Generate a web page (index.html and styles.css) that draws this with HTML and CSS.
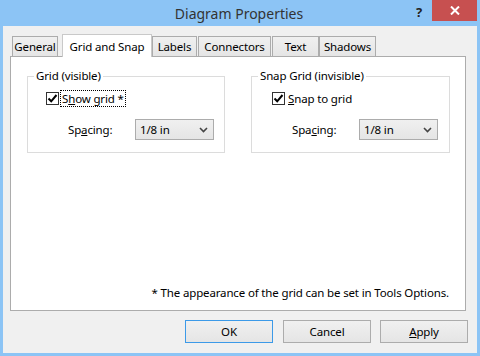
FILE: index.html
```html
<!DOCTYPE html>
<html lang="en">
<head>
    <meta charset="UTF-8">
    <meta name="viewport" content="width=device-width, initial-scale=1.0">
    <title>Diagram Properties</title>
    <link rel="stylesheet" href="styles.css">
</head>
<body>
    <div class="window">
        <div class="titlebar">
            <div class="title">Diagram Properties</div>
            <div class="help">?</div>
            <div class="close">
                <svg width="10" height="9" viewBox="0 0 10 9">
                    <path d="M1 0.5 L9 8.5 M9 0.5 L1 8.5" stroke="#fff" stroke-width="2" fill="none"/>
                </svg>
            </div>
        </div>
        <div class="client">
            <div class="tabs">
                <div class="tab tab-general">General</div>
                <div class="tab tab-grid active">Grid and Snap</div>
                <div class="tab tab-labels">Labels</div>
                <div class="tab tab-connectors">Connectors</div>
                <div class="tab tab-text">Text</div>
                <div class="tab tab-shadows">Shadows</div>
            </div>
            <div class="panel">
                <div class="groups">
                    <fieldset class="group group-left">
                        <legend>Grid (visible)</legend>
                        <div class="check-row">
                            <span class="checkbox">
                                <svg width="11" height="11" viewBox="0 0 11 11">
                                    <path d="M1.5 5.5 L4.2 8.3 L9.5 2" stroke="#000" stroke-width="2" fill="none"/>
                                </svg>
                            </span>
                            <span class="check-label focused">S<u>h</u>ow grid *</span>
                        </div>
                        <div class="spacing-row">
                            <span class="spacing-label">Sp<u>a</u>cing:</span>
                            <div class="select">
                                <span>1/8 in</span>
                                <svg width="9" height="6" viewBox="0 0 9 6">
                                    <path d="M1 1 L4.5 4.5 L8 1" stroke="#444" stroke-width="1.6" fill="none"/>
                                </svg>
                            </div>
                        </div>
                    </fieldset>
                    <fieldset class="group group-right">
                        <legend>Snap Grid (invisible)</legend>
                        <div class="check-row">
                            <span class="checkbox">
                                <svg width="11" height="11" viewBox="0 0 11 11">
                                    <path d="M1.5 5.5 L4.2 8.3 L9.5 2" stroke="#000" stroke-width="2" fill="none"/>
                                </svg>
                            </span>
                            <span class="check-label"><u>S</u>nap to grid</span>
                        </div>
                        <div class="spacing-row">
                            <span class="spacing-label">Spa<u>c</u>ing:</span>
                            <div class="select">
                                <span>1/8 in</span>
                                <svg width="9" height="6" viewBox="0 0 9 6">
                                    <path d="M1 1 L4.5 4.5 L8 1" stroke="#444" stroke-width="1.6" fill="none"/>
                                </svg>
                            </div>
                        </div>
                    </fieldset>
                </div>
                <p class="note">* The appearance of the grid can be set in Tools Options.</p>
            </div>
            <div class="buttons">
                <button class="btn default">OK</button>
                <button class="btn">Cancel</button>
                <button class="btn"><u>A</u>pply</button>
            </div>
        </div>
    </div>
</body>
</html>
```

FILE: styles.css
```css
body {
    margin: 0;
    font-family: "Noto Sans", "Open Sans", sans-serif;
    font-size: 11.5px;
    letter-spacing: -0.15px;
    color: #000;
}
.window {
    width: 480px;
    height: 356px;
    background-color: #8cc4f5;
    display: flex;
    flex-direction: column;
    box-sizing: border-box;
}
.titlebar {
    height: 26px;
    display: flex;
    align-items: flex-start;
    flex-shrink: 0;
}
.title {
    flex: 1;
    padding-left: 70px;
    text-align: center;
    font-size: 14px;
    letter-spacing: 0;
    line-height: 27px;
    color: #333;
}
.help {
    width: 22px;
    margin-right: 2px;
    text-align: center;
    font-weight: bold;
    font-size: 13px;
    line-height: 24px;
    color: #222;
}
.close {
    width: 45px;
    height: 21px;
    margin-right: 3px;
    background-color: #c75050;
    display: flex;
    justify-content: center;
    align-items: center;
}
.client {
    flex: 1;
    margin: 0 3px 3px 3px;
    background-color: #f0f0f0;
    padding-top: 8px;
    display: flex;
    flex-direction: column;
}
.tabs {
    display: flex;
    align-items: flex-end;
    height: 22px;
    padding-left: 9px;
    position: relative;
    z-index: 1;
}
.tab {
    height: 20px;
    box-sizing: border-box;
    border: 1px solid #acacac;
    border-bottom: none;
    background: linear-gradient(#f0f0f0, #e5e5e5);
    display: flex;
    justify-content: center;
    align-items: center;
}
.tab.active {
    height: 23px;
    margin-bottom: -1px;
    background: #fff;
    border-color: #c9c9c9;
}
.tab-general { width: 46px; margin-right: 4px; }
.tab-grid { width: 90px; }
.tab-labels { width: 45px; margin-right: 1px; }
.tab-connectors { width: 73px; margin-right: 1px; }
.tab-text { width: 47px; }
.tab-shadows { width: 57px; }
.panel {
    margin-left: 7px;
    width: 456px;
    height: 255px;
    box-sizing: border-box;
    border: 1px solid #acacac;
    background-color: #fff;
    display: flex;
    flex-direction: column;
}
.groups {
    display: flex;
    gap: 26px;
    margin: 11px 0 0 16px;
}
.group {
    margin: 0;
    padding: 0;
    border: 1px solid #dcdcdc;
    height: 85px;
    box-sizing: border-box;
    min-width: 0;
}
.group-left { width: 198px; }
.group-right { width: 199px; }
.group legend {
    margin-left: 6px;
    padding: 0 2px;
    line-height: 16px;
}
.check-row {
    display: flex;
    align-items: center;
    height: 17px;
    margin-top: 6px;
    padding-left: 18px;
}
.group-right .check-row {
    padding-left: 20px;
}
.checkbox {
    width: 13px;
    height: 13px;
    box-sizing: border-box;
    border: 1px solid #333;
    background-color: #fff;
    display: flex;
    justify-content: center;
    align-items: center;
}
.check-label {
    margin-left: 1px;
    padding: 0 1px;
    line-height: 15px;
    border: 1px dotted transparent;
}
.check-label.focused {
    border-color: #000;
}
.spacing-row {
    display: flex;
    align-items: center;
    margin-top: 12px;
    padding-left: 40px;
}
.spacing-label {
    width: 67px;
}
.select {
    width: 79px;
    height: 21px;
    box-sizing: border-box;
    border: 1px solid #acacac;
    background: linear-gradient(#f0f0f0, #e5e5e5);
    display: flex;
    align-items: center;
    justify-content: space-between;
    padding: 0 5px 0 4px;
}
.note {
    margin: auto 0 0 0;
    padding: 0 16px 9px 0;
    text-align: right;
    line-height: 16px;
}
.buttons {
    display: flex;
    justify-content: flex-end;
    gap: 9px;
    margin-top: 9px;
    padding-right: 9px;
}
.btn {
    width: 88px;
    height: 23px;
    border: 1px solid #acacac;
    background: linear-gradient(#f0f0f0, #e5e5e5);
    font-family: inherit;
    font-size: 11.5px;
    letter-spacing: -0.15px;
    color: #000;
    padding: 0;
}
.btn.default {
    border-color: #3c9ae8;
    margin-right: 1px;
}
```
